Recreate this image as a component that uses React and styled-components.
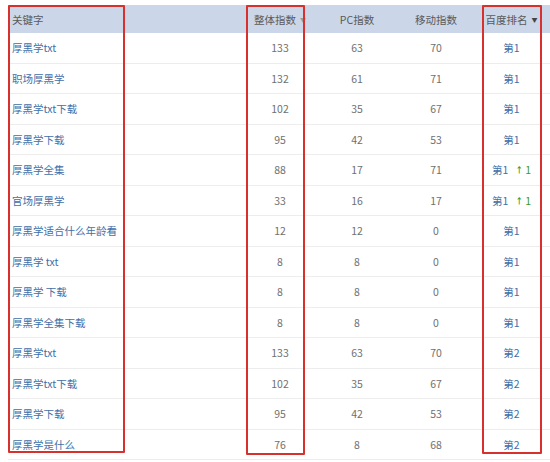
import React from 'react';
import styled, { createGlobalStyle } from 'styled-components';

const Global = createGlobalStyle`
  body {
    margin: 0;
    background: #fff;
    font-family: "Noto Sans CJK SC", "Microsoft YaHei", sans-serif;
  }
`;

const Page = styled.div`
  position: relative;
  padding: 5px 0 0 8px;
  width: 542px;
`;

const Table = styled.div`
  display: grid;
  grid-template-columns: 237px 70px 84px 74px 77px;
`;

const Head = styled.div`
  height: 28px;
  background: #cbd6e8;
  color: #5a5a5a;
  font-size: 10.5px;
  display: flex;
  align-items: center;
  justify-content: ${(p) => (p.left ? 'flex-start' : 'center')};
  padding-left: ${(p) => (p.left ? '4px' : '0')};
  gap: 4px;
`;

const Caret = styled.span`
  font-size: 6px;
  color: ${(p) => (p.dark ? '#444' : '#9a9a9a')};
`;

const Cell = styled.div`
  height: 30.5px;
  box-sizing: border-box;
  border-bottom: 1px solid #ededed;
  font-size: 10.5px;
  display: flex;
  align-items: center;
  justify-content: ${(p) => (p.left ? 'flex-start' : 'center')};
  padding-left: ${(p) => (p.left ? '4px' : '0')};
  color: ${(p) => p.color || '#707070'};
  gap: 7px;
`;

const Up = styled.span`
  color: #3c9a2c;
  font-size: 10.5px;
  display: flex;
  align-items: center;
  gap: 2px;
  & b {
    font-size: 8px;
    font-weight: 700;
  }
`;

const Frame = styled.div`
  position: absolute;
  top: 5px;
  border: 2px solid #d8302c;
  box-sizing: border-box;
  border-radius: 1px;
  pointer-events: none;
`;

const rows = [
  ['厚黑学txt', 133, 63, 70, '第1'],
  ['职场厚黑学', 132, 61, 71, '第1'],
  ['厚黑学txt下载', 102, 35, 67, '第1'],
  ['厚黑学下载', 95, 42, 53, '第1'],
  ['厚黑学全集', 88, 17, 71, '第1', 1],
  ['官场厚黑学', 33, 16, 17, '第1', 1],
  ['厚黑学适合什么年龄看', 12, 12, 0, '第1'],
  ['厚黑学 txt', 8, 8, 0, '第1'],
  ['厚黑学 下载', 8, 8, 0, '第1'],
  ['厚黑学全集下载', 8, 8, 0, '第1'],
  ['厚黑学txt', 133, 63, 70, '第2'],
  ['厚黑学txt下载', 102, 35, 67, '第2'],
  ['厚黑学下载', 95, 42, 53, '第2'],
  ['厚黑学是什么', 76, 8, 68, '第2'],
];

export default function App() {
  return (
    <Page>
      <Global />
      <Table>
        <Head left>关键字</Head>
        <Head>整体指数<Caret>▼</Caret></Head>
        <Head>PC指数</Head>
        <Head>移动指数</Head>
        <Head>百度排名<Caret dark>▼</Caret></Head>
        {rows.map((r, i) => (
          <React.Fragment key={i}>
            <Cell left color="#3f70a8">{r[0]}</Cell>
            <Cell>{r[1]}</Cell>
            <Cell>{r[2]}</Cell>
            <Cell>{r[3]}</Cell>
            <Cell color="#3f6fa6">
              <span>{r[4]}</span>
              {r[5] && <Up><b>↑</b>{r[5]}</Up>}
            </Cell>
          </React.Fragment>
        ))}
      </Table>
      <Frame style={{ left: 8, width: 117, height: 448 }} />
      <Frame style={{ left: 246, width: 59, height: 450 }} />
      <Frame style={{ left: 482, width: 60, height: 449 }} />
    </Page>
  );
}
